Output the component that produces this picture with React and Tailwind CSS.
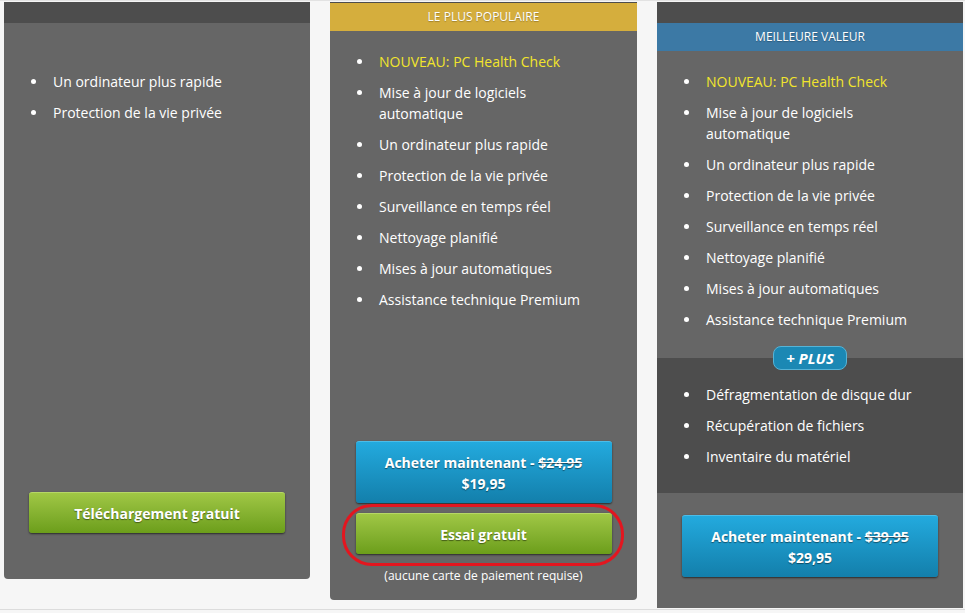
import React from "react";

const Bullet = ({ children, yellow }) => (
  <li className="flex items-start">
    <span className="mt-[8px] ml-[27px] h-[5px] w-[5px] shrink-0 rounded-full bg-white" />
    <span className={"ml-[17px] pr-[40px] " + (yellow ? "text-[#f2e52c]" : "text-white")}>{children}</span>
  </li>
);

const fullItems = [
  "Mise à jour de logiciels automatique",
  "Un ordinateur plus rapide",
  "Protection de la vie privée",
  "Surveillance en temps réel",
  "Nettoyage planifié",
  "Mises à jour automatiques",
  "Assistance technique Premium",
];

const FullList = () => (
  <ul className="flex flex-col gap-[10px] pt-[20px] text-[14px] leading-[21px]">
    <Bullet yellow>NOUVEAU: PC Health Check</Bullet>
    {fullItems.map((t) => (
      <Bullet key={t}>{t}</Bullet>
    ))}
  </ul>
);

const btnText = "[text-shadow:0_1px_1px_rgba(0,0,0,0.45)]";

const BlueButton = ({ old, price }) => (
  <div
    className={
      "flex h-[62px] w-[256px] flex-col items-center justify-center rounded-[3px] border-t border-[#4cbde8] bg-gradient-to-b from-[#23aade] to-[#137fab] text-[14px] font-bold leading-[21px] text-white shadow-[0_1px_2px_rgba(0,0,0,0.6)] " +
      btnText
    }
  >
    <div>
      Acheter maintenant - <span className="line-through">{old}</span>
    </div>
    <div>{price}</div>
  </div>
);

const GreenButton = ({ children }) => (
  <div
    className={
      "flex h-[41px] w-[256px] items-center justify-center rounded-[3px] border-t border-[#b6d766] bg-gradient-to-b from-[#a0c745] to-[#6c9e1a] text-[14px] font-bold text-white shadow-[0_1px_2px_rgba(0,0,0,0.6)] " +
      btnText
    }
  >
    {children}
  </div>
);

export default function App() {
  return (
    <div
      className="h-[613px] w-[965px] overflow-hidden bg-[#f6f6f6]"
      style={{ fontFamily: '"Open Sans", "Noto Sans", sans-serif' }}
    >
      <div className="h-[1px] bg-[#e2e2e2]" />
      <div className="flex h-[608px] items-start gap-[20px] pl-[4px] pt-[1px]">
        {/* Column 1 */}
        <div className="flex h-[577px] w-[306px] flex-col overflow-hidden rounded-b-[4px] bg-[#666666]">
          <div className="h-[21px] bg-[#4d4d4d]" />
          <div className="h-[28px]" />
          <ul className="flex flex-col gap-[10px] pt-[20px] text-[14px] leading-[21px]">
            <Bullet>Un ordinateur plus rapide</Bullet>
            <Bullet>Protection de la vie privée</Bullet>
          </ul>
          <div className="mt-auto mb-[46px] flex justify-center">
            <GreenButton>Téléchargement gratuit</GreenButton>
          </div>
        </div>

        {/* Column 2 */}
        <div className="flex h-[598px] w-[307px] flex-col rounded-b-[4px] bg-[#666666]">
          <div className="h-[1px] bg-[#4d4d4d]" />
          <div
            className="flex h-[28px] items-center justify-center bg-[#d5ae3d] text-[12px] text-white [text-shadow:0_1px_1px_rgba(0,0,0,0.25)]"
          >
            LE PLUS POPULAIRE
          </div>
          <FullList />
          <div className="mt-auto flex flex-col items-center">
            <BlueButton old="$24,95" price="$19,95" />
            <div className="relative mt-[10px]">
              <GreenButton>Essai gratuit</GreenButton>
              <div className="pointer-events-none absolute -left-[14px] -right-[12px] -top-[9px] -bottom-[12px] rounded-[30px] border-[3px] border-[#e3161f]" />
            </div>
            <div className="mt-[14px] mb-[16px] text-[12px] leading-[16px] text-white">
              (aucune carte de paiement requise)
            </div>
          </div>
        </div>

        {/* Column 3 */}
        <div className="flex h-[606px] w-[306px] flex-col bg-[#666666]">
          <div className="h-[21px] bg-[#4d4d4d]" />
          <div className="flex h-[28px] items-center justify-center bg-[#3c79a5] text-[12px] text-white [text-shadow:0_1px_1px_rgba(0,0,0,0.25)]">
            MEILLEURE VALEUR
          </div>
          <div className="pb-[28px]">
            <FullList />
          </div>
          <div className="relative bg-[#4d4d4d] pt-[26px] pb-[26px]">
            <div className="absolute left-1/2 top-[-12px] flex h-[24px] w-[74px] -translate-x-1/2 items-center justify-center rounded-[8px] border border-[#56b3d6] bg-[#1b88b4] text-[15px] font-bold italic text-white">
              + PLUS
            </div>
            <ul className="flex flex-col gap-[10px] text-[14px] leading-[21px]">
              <Bullet>Défragmentation de disque dur</Bullet>
              <Bullet>Récupération de fichiers</Bullet>
              <Bullet>Inventaire du matériel</Bullet>
            </ul>
          </div>
          <div className="mt-[22px] flex justify-center">
            <BlueButton old="$39,95" price="$29,95" />
          </div>
        </div>
      </div>
      <div className="h-[1px] bg-[#dcdcdc]" />
    </div>
  );
}
